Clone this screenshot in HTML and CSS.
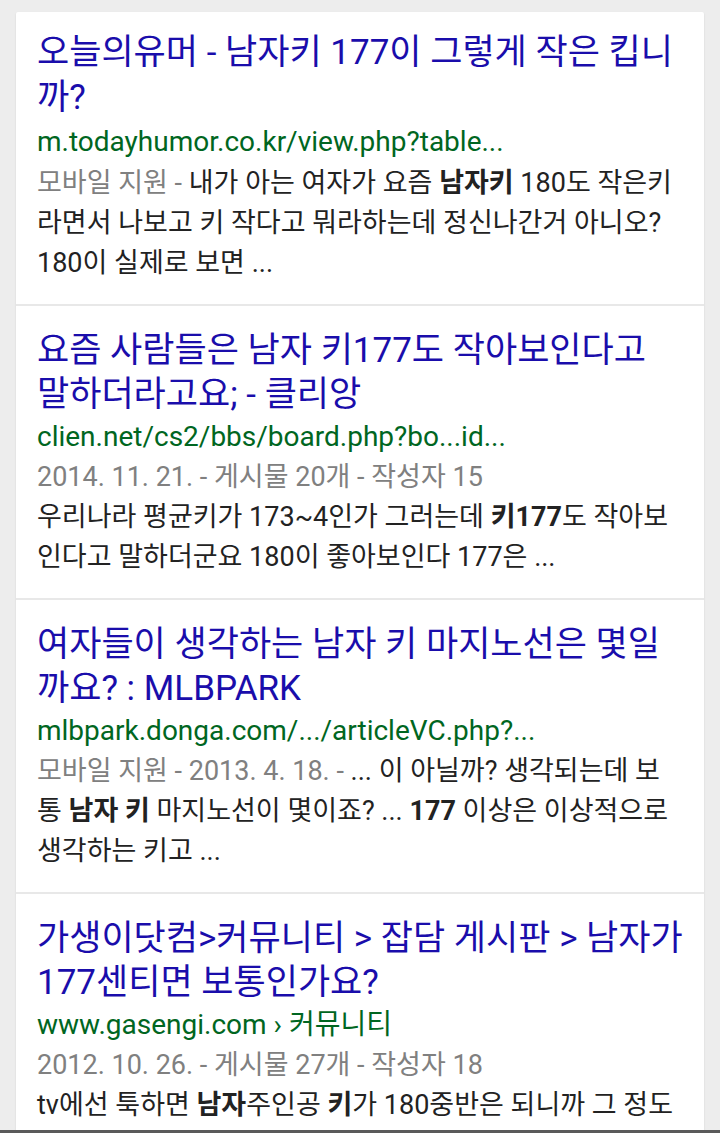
FILE: index.html
```html
<!DOCTYPE html>
<html lang="ko">
<head>
<meta charset="utf-8">
<title>검색 결과</title>
<link rel="stylesheet" href="styles.css">
</head>
<body>
<div class="results">
  <div class="card first">
    <a class="title">오늘의유머 - 남자키 177이 그렇게 작은 킵니<br>까?</a>
    <div class="url">m.todayhumor.co.kr/view.php?table...</div>
    <div class="snippet"><span class="meta">모바일 지원 - </span>내가 아는 여자가 요즘 <b>남자키</b> 180도 작은키<br>라면서 나보고 키 작다고 뭐라하는데 정신나간거 아니오?<br>180이 실제로 보면 ...</div>
  </div>
  <div class="card">
    <a class="title">요즘 사람들은 남자 키177도 작아보인다고<br>말하더라고요; - 클리앙</a>
    <div class="url">clien.net/cs2/bbs/board.php?bo...id...</div>
    <div class="meta line">2014. 11. 21. - 게시물 20개 - 작성자 15</div>
    <div class="snippet">우리나라 평균키가 173~4인가 그러는데 <b>키177</b>도 작아보<br>인다고 말하더군요 180이 좋아보인다 177은 ...</div>
  </div>
  <div class="card">
    <a class="title">여자들이 생각하는 남자 키 마지노선은 몇일<br>까요? : MLBPARK</a>
    <div class="url">mlbpark.donga.com/.../articleVC.php?...</div>
    <div class="snippet"><span class="meta">모바일 지원 - 2013. 4. 18. - </span>... 이 아닐까? 생각되는데 보<br>통 <b>남자 키</b> 마지노선이 몇이죠? ... <b>177</b> 이상은 이상적으로<br>생각하는 키고 ...</div>
  </div>
  <div class="card last">
    <a class="title">가생이닷컴&gt;커뮤니티 &gt; 잡담 게시판 &gt; 남자가<br>177센티면 보통인가요?</a>
    <div class="url">www.gasengi.com › 커뮤니티</div>
    <div class="meta line">2012. 10. 26. - 게시물 27개 - 작성자 18</div>
    <div class="snippet">tv에선 툭하면 <b>남자</b>주인공 <b>키</b>가 180중반은 되니까 그 정도</div>
  </div>
</div>
<div class="navedge"></div>
</body>
</html>
```
FILE: styles.css
```css
html, body {
  margin: 0;
  padding: 0;
}
body {
  background: #ededed;
  font-family: Roboto, "Noto Sans CJK KR", "Noto Sans", sans-serif;
  color: #222;
  overflow: hidden;
  height: 1133px;
}
.results {
  margin: 12px 16px 0;
  background: #fff;
  border-radius: 2px 2px 0 0;
  box-shadow: 0 1px 2px rgba(0, 0, 0, 0.12);
}
.card {
  padding: 23px 21px 21px;
  border-top: 2px solid #e8e8e8;
  white-space: nowrap;
}
.card.first {
  border-top: none;
  padding-top: 18px;
}
.card.first .title {
  line-height: 45px;
}
.card.first .url {
  line-height: 43px;
}
.card.last {
  padding-bottom: 10px;
}
.title {
  display: block;
  color: #1a0dab;
  font-size: 35px;
  line-height: 44px;
  text-decoration: none;
}
.url {
  color: #006621;
  font-size: 28px;
  line-height: 40px;
}
.meta {
  color: #808080;
}
.line {
  font-size: 27px;
  line-height: 40px;
}
.snippet {
  font-size: 27px;
  line-height: 40px;
  color: #222;
}
.snippet b {
  font-weight: 700;
  color: #222;
}
.navedge {
  position: fixed;
  left: 0;
  right: 0;
  bottom: 0;
  height: 3px;
  background: #5a5a5a;
}
```
